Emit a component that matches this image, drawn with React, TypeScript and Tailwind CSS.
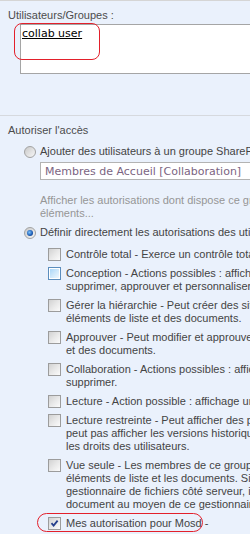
import React from 'react';

type BoxState = 'off' | 'hover' | 'on';

const permissions: { lines: string[]; state: BoxState }[] = [
  { lines: ['Contrôle total - Exerce un contrôle total.'], state: 'off' },
  {
    lines: [
      'Conception - Actions possibles : afficher, ajouter, mettre à jour,',
      'supprimer, approuver et personnaliser.',
    ],
    state: 'hover',
  },
  {
    lines: [
      'Gérer la hiérarchie - Peut créer des sites et modifier les pages, les paramètres',
      'éléments de liste et des documents.',
    ],
    state: 'off',
  },
  {
    lines: [
      'Approuver - Peut modifier et approuver des pages, des éléments de liste',
      'et des documents.',
    ],
    state: 'off',
  },
  {
    lines: ['Collaboration - Actions possibles : afficher, ajouter, mettre à jour et', 'supprimer.'],
    state: 'off',
  },
  { lines: ['Lecture - Action possible : affichage uniquement.'], state: 'off' },
  {
    lines: [
      'Lecture restreinte - Peut afficher des pages et des documents, mais ne',
      'peut pas afficher les versions historiques ou les informations sur',
      'les droits des utilisateurs.',
    ],
    state: 'off',
  },
  {
    lines: [
      'Vue seule - Les membres de ce groupe peuvent afficher des pages, des',
      'éléments de liste et les documents. Si le document a un',
      'gestionnaire de fichiers côté serveur, ils peuvent uniquement afficher le',
      'document au moyen de ce gestionnaire de fichiers.',
    ],
    state: 'off',
  },
];

function Checkbox({ state }: { state: BoxState }) {
  if (state === 'hover') {
    return (
      <div className="w-[13px] h-[13px] shrink-0 border border-[#5b8dbd] bg-white p-px">
        <div className="w-full h-full bg-gradient-to-br from-[#a9d6f8] via-[#cfe8fb] to-[#eef7ff]" />
      </div>
    );
  }
  return (
    <div className="relative w-[13px] h-[13px] shrink-0 border border-[#9c9c9c] bg-gradient-to-br from-[#d2d2d2] via-[#e8e8e8] to-[#fbfbfb]">
      {state === 'on' && (
        <svg className="absolute left-[1px] top-[1px]" width="9" height="9" viewBox="0 0 9 9">
          <path d="M1.5 4.2 L3.6 6.6 L7.6 1.6" fill="none" stroke="#263f8c" strokeWidth="1.8" />
        </svg>
      )}
    </div>
  );
}

function Radio({ checked }: { checked?: boolean }) {
  return (
    <div className="w-[12px] h-[12px] shrink-0 rounded-full border border-[#a2a2a2] bg-gradient-to-br from-[#c9c9c9] to-[#f7f7f7] flex items-center justify-center">
      {checked && (
        <div className="w-[6px] h-[6px] rounded-full bg-[radial-gradient(circle_at_40%_40%,#7cc4ff,#1a58b0_60%,#0c2f6e)]" />
      )}
    </div>
  );
}

export default function App() {
  return (
    <div className="w-[250px] h-[534px] overflow-hidden bg-[#eaf1fc] border-t border-[#d5d5d5] font-['Liberation_Sans',Arial,sans-serif] text-[11px] leading-[13px] text-[#444]">
      {/* users / groups */}
      <div className="pt-[8px] pl-[8px] text-[#4c4c4c]">Utilisateurs/Groupes :</div>
      <div className="relative ml-[20px] mt-[2px] w-[260px] h-[50px] border border-[#a5a5a5] bg-white pl-[1px] pt-[2px]">
        <span className="font-['DejaVu_Sans',Verdana,sans-serif] text-[11px] leading-[13px] text-black underline">
          collab user
        </span>
        <div className="absolute left-[-7px] top-[-2px] w-[86px] h-[37px] rounded-[8px] border border-[#e3202b]" />
      </div>

      <div className="mt-[41px] h-px bg-[#d6d9de]" />

      {/* access */}
      <div className="mt-[8px] pl-[8px] text-[#4c4c4c]">Autoriser l'accès</div>

      <div className="mt-[8px] pl-[24px] flex items-center gap-[4px] whitespace-nowrap">
        <Radio />
        <span>Ajouter des utilisateurs à un groupe SharePoint</span>
      </div>
      <div className="ml-[40px] mt-[4px] w-[260px] h-[18px] border border-[#b3b3b3] bg-white pl-[4px] flex items-center whitespace-nowrap font-['DejaVu_Sans',Verdana,sans-serif] text-[11px] text-[#7b6482]">
        Membres de Accueil [Collaboration]
      </div>
      <div className="mt-[14px] pl-[40px] text-[#969696] whitespace-nowrap">
        <div>Afficher les autorisations dont dispose ce groupe sur les sites, les listes et les</div>
        <div>éléments...</div>
      </div>

      <div className="mt-[6px] pl-[24px] flex items-center gap-[4px] whitespace-nowrap">
        <Radio checked />
        <span>Définir directement les autorisations des utilisateurs</span>
      </div>

      <div className="mt-[9px] flex flex-col gap-[6px]">
        {permissions.map((p, i) => (
          <div key={i} className="pl-[48px] flex items-start gap-[5px] whitespace-nowrap">
            <Checkbox state={p.state} />
            <div>
              {p.lines.map((l, j) => (
                <div key={j}>{l}</div>
              ))}
            </div>
          </div>
        ))}
        <div className="relative pl-[48px] flex items-start gap-[5px] whitespace-nowrap">
          <Checkbox state="on" />
          <span>Mes autorisation pour Mosd -</span>
          <div className="absolute left-[37px] top-[-4px] w-[166px] h-[19px] rounded-[10px] border border-[#e3202b]" />
        </div>
      </div>
    </div>
  );
}
